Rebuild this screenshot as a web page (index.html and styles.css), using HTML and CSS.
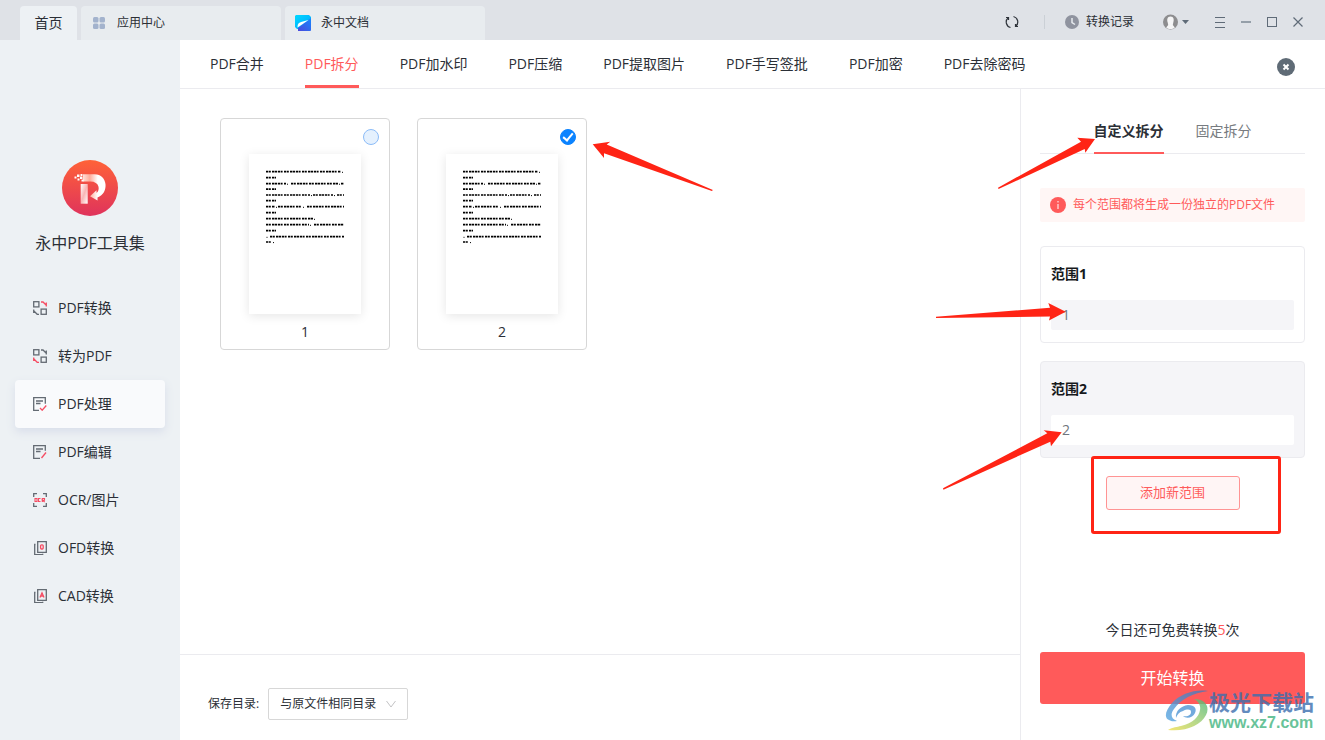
FILE: index.html
```html
<!DOCTYPE html>
<html lang="zh-CN">
<head>
<meta charset="utf-8">
<title>永中PDF工具集</title>
<meta name="viewport" content="width=device-width, initial-scale=1">
<link rel="stylesheet" href="styles.css">
</head>
<body>
<svg class="defs" width="0" height="0" aria-hidden="true">
  <defs>
    <linearGradient id="logoRed" x1="0" y1="0" x2="0" y2="1"><stop offset="0" stop-color="#ff6238"/><stop offset="1" stop-color="#df335c"/></linearGradient>
    <linearGradient id="stem" x1="0" y1="0" x2="1" y2="1"><stop offset="0" stop-color="#fff"/><stop offset=".5" stop-color="#f9b5b5"/><stop offset="1" stop-color="#fff"/></linearGradient>
    <linearGradient id="bowl" x1="0" y1="0" x2="1" y2="0"><stop offset="0" stop-color="#ffe0d8"/><stop offset=".3" stop-color="#ffad9c"/><stop offset=".65" stop-color="#fff"/></linearGradient>
    <linearGradient id="docA" x1="0" y1="0" x2="1" y2="1"><stop offset="0" stop-color="#00d9ff"/><stop offset="1" stop-color="#00a2ff"/></linearGradient>
    <linearGradient id="docB" x1="1" y1="0" x2="0" y2="1"><stop offset="0" stop-color="#1488ff"/><stop offset="1" stop-color="#4a48dc"/></linearGradient>
    <linearGradient id="swirlA" x1="0" y1="1" x2="1" y2="0"><stop offset="0" stop-color="#58a9e4"/><stop offset="1" stop-color="#4a74b4"/></linearGradient>
    <linearGradient id="swirlB" x1="0" y1="1" x2="1" y2="0"><stop offset="0" stop-color="#f3e04e"/><stop offset=".55" stop-color="#9bcd72"/><stop offset="1" stop-color="#4cb878"/></linearGradient>
    <symbol id="docText" viewBox="0 0 112 160">
      <g stroke="#000" stroke-width="1.7" stroke-dasharray="2.4 .6 1.8 1.2 2.5 .5 2.2 .8 2.4 .6 1.6 1.4">
        <path d="M17 17.7H92M17 35.2H27M17 46.6H27M17 58.7H27M17 23.7H27M17 76.7H27M17 88H23"/>
        <path d="M17 29.6H37M42 29.6H89M92 29.6H95"/>
        <path d="M17 41H61M64 41H84M88 41H95"/>
        <path d="M17 52.7H26M29 52.7H53M58 52.7H95"/>
        <path d="M17 64.7H64"/>
        <path d="M17 70.7H60M65 70.7H95"/>
        <path d="M21 82.7H95"/>
      </g>
      <path d="M93 18.3h1M38 30.2h1M90 30.2h1M62 41.6h1M85 41.6h1M27 53.3h1M54 53.3h1M65 65.3h1M61 71.3h1M17.500 83.300h1M24 88.600h1" stroke="#000"/>
    </symbol>
  </defs>
</svg>
<div class="app">
  <header class="titlebar">
    <nav class="window-tabs">
      <button class="window-tab window-tab-home">首页</button>
      <button class="window-tab window-tab-wide">
        <svg width="12" height="12" viewBox="0 0 12 12" fill="#a3b3cd"><rect width="5.500" height="5.500" rx="1.500"/><rect x="6.500" width="5.500" height="5.500" rx="1.500"/><rect y="6.500" width="5.500" height="5.500" rx="1.500"/><rect x="6.500" y="6.500" width="5.500" height="5.500" rx="1.500"/></svg>
        <span>应用中心</span>
      </button>
      <button class="window-tab window-tab-wide window-tab-doc">
        <svg width="16" height="16" viewBox="0 0 16 16"><path d="M1 0h13l2 2v7L3 14H2l-2-2V1z" fill="url(#docA)"/><path d="M16 3v12a1 1 0 0 1-1 1H3v-3z" fill="url(#docB)"/><path d="M2.500 12.500c0-3.500 1-4.500 3.500-5.500l7.500-2L7 9.500z" fill="#fff"/></svg>
        <span>永中文档</span>
      </button>
    </nav>
    <div class="window-tools">
      <button class="tool tool-refresh" aria-label="刷新"><svg width="14" height="14" viewBox="0 0 14 14" fill="none" stroke="#2f343b" stroke-width="1.200"><path d="M5.500 12.500A5.600 5.600 0 0 1 3 3M8.500 1.500A5.600 5.600 0 0 1 11 11M1 2.500h2.500V5M13 11.500h-2.500V9"/></svg></button>
      <span class="divider"></span>
      <button class="tool tool-history"><svg width="14" height="14" viewBox="0 0 14 14"><circle cx="7" cy="7" r="7" fill="#8f939f"/><path d="M7 3v4.500l3 2" fill="none" stroke="#e8ebef" stroke-width="1.500"/></svg><span>转换记录</span></button>
      <button class="tool tool-user" aria-label="账户"><svg width="26" height="16" viewBox="0 0 26 16"><circle cx="7.500" cy="8" r="7.500" fill="#8d8d8f"/><path d="M7.500 2.500c3.400 0 3.700 3.500 2.800 6l-.5 2.500 2 2.500c-2 2.100-6.600 2.100-8.600 0l2-2.500-.5-2.500c-.9-2.500-.6-6 2.800-6z" fill="#f5f5f6"/><path d="M19 6h7l-3.500 4z" fill="#5f6b78"/></svg></button>
      <button class="tool tool-menu" aria-label="菜单"><svg width="12" height="12" viewBox="0 0 12 12"><path d="M1 1.500h10M1 6.500h10M1 11.500h10" stroke="#5f6b78"/></svg></button>
      <button class="tool" aria-label="最小化"><svg width="12" height="12" viewBox="0 0 12 12"><path d="M1 6h10" stroke="#7d8894" stroke-width="1.500"/></svg></button>
      <button class="tool" aria-label="最大化"><svg width="12" height="12" viewBox="0 0 12 12"><rect x="1.500" y="1.500" width="9" height="9" fill="none" stroke="#5f6b78"/></svg></button>
      <button class="tool" aria-label="关闭"><svg width="12" height="12" viewBox="0 0 12 12"><path d="M1.500 1.500l9 9M10.500 1.500l-9 9" stroke="#5f6b78" stroke-width="1.200"/></svg></button>
    </div>
  </header>

  <aside class="sidebar">
    <svg class="logo" width="56" height="56" viewBox="0 0 56 56"><circle cx="28" cy="28" r="28" fill="url(#logoRed)"/><path d="M18.700 24h7v19.700h-7z" fill="url(#stem)"/><path d="M21 14.300h11.500C46 14.300 47.500 33.500 35.500 37.500V40.500L28 36.300l6.500-6v2.700c4-3 3-11.500-6-11.500H21z" fill="url(#bowl)"/><path d="M15 14.500h2.500V17H15zM12.500 16.500h2v2h-2zM15.500 18.500h2v2h-2zM18 16.500h2.500V19H18zM19.500 19.500h2v2h-2zM18.500 14h2v2h-2z" fill="#fff"/></svg>
    <h1 class="app-name">永中PDF工具集</h1>
    <nav class="menu">
      <a class="menu-item" href="#"><svg width="14" height="14" viewBox="0 0 14 14" fill="none" stroke="#646b73" stroke-width="1.300"><rect x=".7" y=".7" width="5.200" height="5.200"/><rect x="8.100" y="8.100" width="5.200" height="5.200"/><path d="M.7 9v.8l3.500 3.500H6M.7 12V8.500"/><path d="M8 1h2l3.300 3.200M13.300 1.500v4" stroke="#f64c62"/></svg><span>PDF转换</span></a>
      <a class="menu-item" href="#"><svg width="14" height="14" viewBox="0 0 14 14" fill="none" stroke="#646b73" stroke-width="1.300"><rect x=".7" y=".7" width="5.200" height="5.200"/><rect x="8.100" y="8.100" width="5.200" height="5.200"/><path d="M.7 9v.8l3.500 3.500H6M.7 12V8.500" stroke="#f64c62"/><path d="M8 1h2l3.300 3.200M13.300 1.500v4"/></svg><span>转为PDF</span></a>
      <a class="menu-item menu-item-active" href="#"><svg width="14" height="14" viewBox="0 0 14 14" fill="none" stroke="#646b73" stroke-width="1.300"><path d="M6 13.300H.7V.7h11.600v6M3 4h7M3 6.500h4.500"/><path d="M7 11l2.200 2.200L13.300 8.500" stroke="#f64c62"/></svg><span>PDF处理</span></a>
      <a class="menu-item" href="#"><svg width="14" height="14" viewBox="0 0 14 14" fill="none" stroke="#646b73" stroke-width="1.300"><path d="M7 13.300H.7V.7h11.600v5M3 4h7M3 6.500h4.500"/><path d="M8.500 13L13 7.500" stroke="#f64c62"/></svg><span>PDF编辑</span></a>
      <a class="menu-item" href="#"><svg width="14" height="14" viewBox="0 0 14 14" fill="none" stroke="#646b73" stroke-width="1.300"><path d="M.7 4V.7H4M10 .7h3.300V4M13.300 10v3.300H10M4 13.300H.7V10"/><path d="M2 5.500h2v3H2zM7.500 5.500h-2v3h2M9.300 9V5.500h2.200v1.800H9.500L11.700 9" stroke="#f64c62" stroke-width="1.100"/></svg><span>OCR/图片</span></a>
      <a class="menu-item" href="#"><svg width="14" height="14" viewBox="0 0 14 14" fill="none" stroke="#646b73" stroke-width="1.300"><path d="M4.700.7h8.600v10.600H4.700zM2.500 3.500h-.8v10.200h8v-.9"/><rect x="7.600" y="3.800" width="2.600" height="4.200" rx="1" stroke="#f64c62"/></svg><span>OFD转换</span></a>
      <a class="menu-item" href="#"><svg width="14" height="14" viewBox="0 0 14 14" fill="none" stroke="#646b73" stroke-width="1.300"><path d="M4.700.7h8.600v10.600H4.700zM2.500 3.500h-.8v10.200h8v-.9"/><path d="M7 8.500L9 3.800l2 4.700M7.800 7h2.400" stroke="#f64c62"/></svg><span>CAD转换</span></a>
    </nav>
  </aside>

  <main class="main">
    <nav class="tools-nav">
      <a class="tools-link" href="#">PDF合并</a>
      <a class="tools-link tools-link-active" href="#">PDF拆分</a>
      <a class="tools-link" href="#">PDF加水印</a>
      <a class="tools-link" href="#">PDF压缩</a>
      <a class="tools-link" href="#">PDF提取图片</a>
      <a class="tools-link" href="#">PDF手写签批</a>
      <a class="tools-link" href="#">PDF加密</a>
      <a class="tools-link" href="#">PDF去除密码</a>
      <button class="close-tool" aria-label="关闭工具"><svg width="18" height="18" viewBox="0 0 18 18"><circle cx="9" cy="9" r="9" fill="#5f6b76"/><path d="M6.500 6.500l5 5M11.500 6.500l-5 5" stroke="#fff" stroke-width="2"/></svg></button>
    </nav>

    <section class="workspace">
      <div class="pages">
        <label class="page-card">
          <input class="page-check" type="checkbox">
          <svg class="page-thumb" width="112" height="160"><use href="#docText"/></svg>
          <span class="page-number">1</span>
        </label>
        <label class="page-card">
          <input class="page-check" type="checkbox" checked>
          <svg class="page-thumb" width="112" height="160"><use href="#docText"/></svg>
          <span class="page-number">2</span>
          <svg class="mark mark-page" width="124" height="54" viewBox="591 139 124 54"><path d="M592.700 144.300l17.500-2.600-3.500 2.900L712.900 190l-1 1L604 153.300v4.700z"/></svg>
        </label>
      </div>
      <footer class="save-bar">
        <label for="folder">保存目录:</label>
        <div class="select-box">
          <select id="folder" class="select"><option>与原文件相同目录</option></select>
          <svg class="select-arrow" width="12" height="8" viewBox="0 0 12 8"><path d="M1.500 1l4.500 6L10.500 1" fill="none" stroke="#c3c3c5"/></svg>
        </div>
      </footer>
    </section>

    <section class="panel">
      <div class="split-tabs">
        <button class="split-tab split-tab-active">自定义拆分</button>
        <button class="split-tab">固定拆分</button>
      </div>
      <p class="notice"><svg width="16" height="16" viewBox="0 0 16 16"><circle cx="8" cy="8" r="8" fill="#ff5a5a"/><path d="M8 4v1.500M8 7v5" stroke="#ffd9d9" stroke-width="1.300"/></svg><span>每个范围都将生成一份独立的PDF文件</span></p>
      <div class="ranges">
        <div class="range">
          <label class="range-label" for="range1">范围1</label>
          <input class="range-input" id="range1" type="text" value="1">
        </div>
        <div class="range range-active">
          <label class="range-label" for="range2">范围2</label>
          <input class="range-input" id="range2" type="text" value="2">
        </div>
      </div>
      <button class="add-range">添加新范围</button>
      <p class="quota">今日还可免费转换<span class="quota-count">5</span>次</p>
      <button class="start">开始转换</button>

      <svg class="mark mark-tab" width="105" height="58" viewBox="995 135 105 58"><path d="M1095 139l-17.700-1.300 3.700 4L998 187.700l.5 1.300 86.200-40 .6 3.700z"/></svg>
      <svg class="mark mark-range1" width="138" height="24" viewBox="932 300 138 24"><path d="M1065.700 311.700L1048.300 303l1.700 4.700L936 316.700v1.300l114-1.500-1 4z"/></svg>
      <svg class="mark mark-range2" width="126" height="64" viewBox="940 428 126 64"><path d="M1061.700 432.300l-18-2 3.600 3L943 488.300l.4 1.400 106.900-48 .7 4.600z"/></svg>
      <div class="mark mark-frame"></div>
      <div class="watermark">
        <svg width="44" height="44" viewBox="0 0 44 44"><path d="M43 1C30-1 15 4 7 13 0 21-1 28 4 30c3 2 6 1 8 1-6-2-7-7-3-12C16 9 28 3 43 1z" fill="url(#swirlA)"/><path d="M11 28c-1-7 5-12 12-13 7 0 9 4 7 8-2 5-9 6-12 3 5 1 8-1 8-4 0-3-4-3-8-1-4 1-6 4-7 7z" fill="#4f96d4"/><path d="M29 9c12 0 16 8 12 16-5 10-20 17-38 15 5-3 9-3 13-4 12-3 18-9 19-16 1-5-2-9-6-11z" fill="url(#swirlB)"/></svg>
        <div class="watermark-text"><span class="watermark-name">极光下载站</span><span class="watermark-url">www.xz7.com</span></div>
      </div>
    </section>
  </main>
</div>
</body>
</html>
```
FILE: styles.css
```css
* {
  box-sizing: border-box;
}

body {
  margin: 0;
  color: #2b2f36;
  background: #fff;
  font-family: "Open Sans", "Noto Sans CJK SC", sans-serif;
  font-size: 14px;
  line-height: 20px;
}

button,
input,
select {
  margin: 0;
  padding: 0;
  border: 0;
  background: none;
  color: inherit;
  font: inherit;
}

a {
  color: inherit;
  text-decoration: none;
}

p,
h1 {
  margin: 0;
}

svg {
  display: block;
  flex: none;
}

.defs {
  position: absolute;
}

.app {
  display: grid;
  grid-template: 40px 1fr / 180px 1fr;
  min-height: 100vh;
}

/* Title bar */
.titlebar {
  grid-column: 1 / -1;
  display: flex;
  justify-content: space-between;
  padding: 0 21px 0 20px;
  background: #dfe2e7;
}

.window-tabs {
  display: flex;
  gap: 4px;
  padding-top: 6px;
}

.window-tab {
  display: flex;
  align-items: center;
  border-radius: 4px 4px 0 0;
  background: #e8ecef;
  font-size: 12px;
}

.window-tab-home {
  justify-content: center;
  width: 57px;
  background: #edf1f4;
  font-size: 14px;
}

.window-tab-wide {
  gap: 12px;
  width: 200px;
  padding-left: 12px;
}

.window-tab-doc {
  gap: 10px;
  padding-left: 10px;
}

.window-tools {
  display: flex;
  align-items: center;
  gap: 14px;
  padding-top: 4px;
}

.tool {
  display: flex;
  align-items: center;
  gap: 7px;
  font-size: 12px;
}

.tool-refresh {
  margin-right: 11px;
}

.divider {
  width: 1px;
  height: 14px;
  margin-right: 6px;
  background: #cbd0d6;
}

.tool-history {
  margin-right: 15px;
}

.tool-user {
  margin-right: 11px;
}

/* Sidebar */
.sidebar {
  display: flex;
  flex-direction: column;
  align-items: center;
  padding: 120px 15px 0;
  background: #edf1f4;
}

.app-name {
  margin-top: 15px;
  font-size: 16px;
  font-weight: 400;
  line-height: 24px;
}

.menu {
  width: 100%;
  margin-top: 29px;
}

.menu-item {
  display: flex;
  align-items: center;
  gap: 11px;
  height: 48px;
  padding-left: 18px;
  border-radius: 4px;
}

.menu-item-active {
  background: #f9fafc;
  box-shadow: 0 4px 10px #d9deea;
}

/* Main area */
.main {
  display: grid;
  grid-template: 49px 1fr / 1fr 305px;
  min-width: 0;
}

.tools-nav {
  grid-column: 1 / -1;
  display: flex;
  gap: 41px;
  padding: 0 30px;
  border-bottom: 1px solid #ebebef;
}

.tools-link {
  padding-top: 14px;
  border-bottom: 3px solid transparent;
  white-space: nowrap;
}

.tools-link-active {
  border-color: #ff5a5a;
  color: #ff5a5a;
}

.close-tool {
  margin-left: auto;
  padding-top: 5px;
}

.workspace {
  display: flex;
  flex-direction: column;
}

.pages {
  display: flex;
  flex: 1;
  flex-wrap: wrap;
  align-content: flex-start;
  gap: 27px;
  padding: 29px 40px;
}

.page-card {
  position: relative;
  display: flex;
  flex-direction: column;
  align-items: center;
  width: 170px;
  padding: 35px 0 7px;
  border: 1px solid #d7d7d7;
  border-radius: 4px;
}

.page-check {
  position: absolute;
  top: 10px;
  right: 10px;
  display: grid;
  align-items: start;
  justify-items: center;
  width: 16px;
  height: 16px;
  border: 1px solid #8cbcf8;
  border-radius: 50%;
  background: #e5f1fe;
  appearance: none;
}

.page-check:checked {
  border-color: #0b83ff;
  background: #0b83ff;
}

.page-check:checked::after {
  content: "";
  box-sizing: border-box;
  width: 6px;
  height: 10px;
  margin-top: 1px;
  border: solid #fff;
  border-width: 0 2px 2px 0;
  transform: rotate(40deg);
}

.page-thumb {
  background: #fff;
  box-shadow: 0 2px 10px #e6e6e6;
}

.page-number {
  margin-top: 8px;
}

.save-bar {
  display: flex;
  align-items: center;
  gap: 9px;
  height: 86px;
  padding: 12px 28px 0;
  border-top: 1px solid #ebebef;
  font-size: 12px;
}

.select-box {
  position: relative;
  width: 140px;
}

.select {
  display: block;
  width: 100%;
  height: 32px;
  padding: 0 24px 0 11px;
  border: 1px solid #d7d7d7;
  border-radius: 2px;
  background: #fff;
  appearance: none;
}

.select-arrow {
  position: absolute;
  top: 12px;
  right: 11px;
  pointer-events: none;
}

/* Split settings */
.panel {
  position: relative;
  display: flex;
  flex-direction: column;
  padding: 24px 20px 36px 19px;
  border-left: 1px solid #ebebef;
}

.split-tabs {
  display: flex;
  justify-content: center;
  gap: 32px;
  border-bottom: 1px solid #ebebef;
}

.split-tab {
  height: 41px;
  margin-bottom: -1px;
  padding-bottom: 3px;
  border-bottom: 2px solid transparent;
  color: #777b80;
}

.split-tab-active {
  border-color: #ff5a5a;
  color: #2b2f36;
  font-weight: 700;
}

.notice {
  display: flex;
  align-items: center;
  gap: 7px;
  height: 34px;
  margin-top: 34px;
  padding-left: 10px;
  border-radius: 2px;
  background: #fff6f5;
  color: #ff5a5a;
  font-size: 12px;
}

.ranges {
  display: grid;
  gap: 18px;
  margin-top: 24px;
}

.range {
  display: grid;
  gap: 16px;
  padding: 17px 10px 12px;
  border: 1px solid #ebebef;
  border-radius: 4px;
}

.range-active {
  background: #f5f5f8;
}

.range-label {
  color: #17191c;
  font-weight: 700;
}

.range-input {
  width: 100%;
  height: 30px;
  padding: 0 11px 2px;
  border-radius: 2px;
  background: #f5f5f8;
  color: #70757c;
}

.range-active .range-input {
  background: #fff;
}

.add-range {
  align-self: center;
  width: 134px;
  height: 34px;
  margin-top: 18px;
  padding-bottom: 2px;
  border: 1px solid #ff9494;
  border-radius: 3px;
  background: #fff5f5;
  color: #ff5a5a;
  font-size: 13px;
}

.quota {
  margin-top: auto;
  text-align: center;
}

.quota-count {
  color: #ff5a5a;
}

.start {
  height: 52px;
  margin-top: 12px;
  border-radius: 3px;
  background: #ff5a5a;
  color: #fff;
  font-size: 16px;
}

/* Annotations drawn over the window */
.mark {
  position: absolute;
  z-index: 1;
  fill: #ff2415;
  pointer-events: none;
}

.mark-page {
  left: 173px;
  top: 20px;
}

.mark-tab {
  left: -26px;
  top: 46px;
}

.mark-range1 {
  left: -89px;
  top: 211px;
}

.mark-range2 {
  left: -81px;
  top: 339px;
}

.mark-frame {
  left: 70px;
  top: 367px;
  width: 190px;
  height: 78px;
  border: 3px solid #ff2415;
  border-radius: 3px;
}

.watermark {
  position: absolute;
  right: 11px;
  bottom: 6px;
  display: flex;
  align-items: center;
  opacity: 0.8;
  pointer-events: none;
}

.watermark-text {
  display: flex;
  flex-direction: column;
  font-weight: 700;
}

.watermark-name {
  color: #3c6fae;
  font-size: 21px;
  line-height: 22px;
}

.watermark-url {
  color: #43b581;
  font-family: "Liberation Sans", sans-serif;
  font-size: 16px;
  line-height: 20px;
}
```
